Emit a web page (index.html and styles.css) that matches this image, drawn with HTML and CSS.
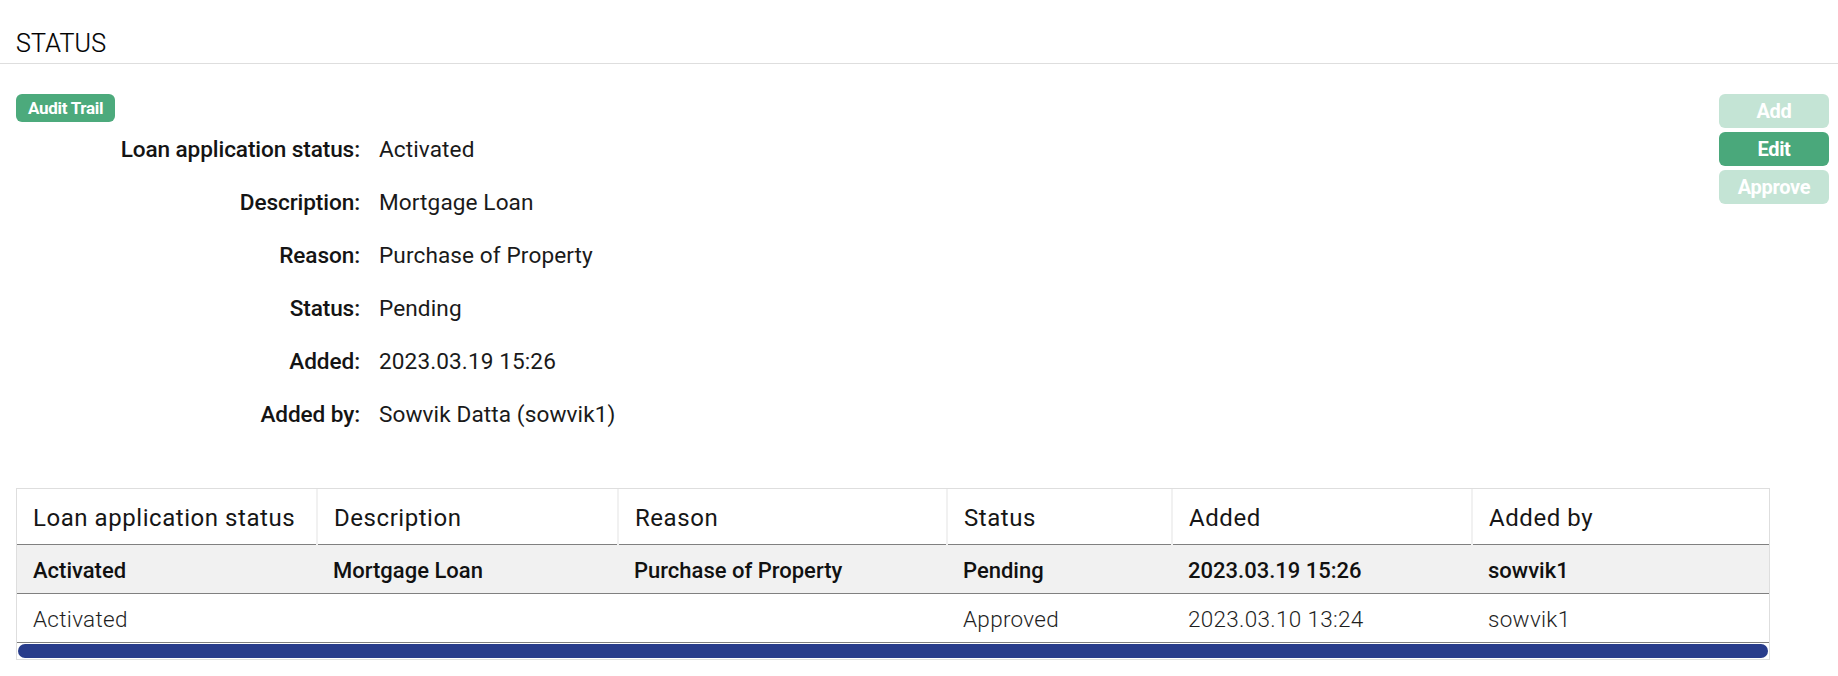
FILE: index.html
```html
<!DOCTYPE html>
<html lang="en">
<head>
<meta charset="utf-8">
<title>Status</title>
<link rel="stylesheet" href="styles.css">
</head>
<body>
<header class="page-header">
  <h1 class="page-title">STATUS</h1>
</header>
<main class="content">
  <div class="top">
    <div class="details">
      <span class="badge">Audit Trail</span>
      <dl class="fields">
        <dt>Loan application status:</dt><dd>Activated</dd>
        <dt>Description:</dt><dd>Mortgage Loan</dd>
        <dt>Reason:</dt><dd>Purchase of Property</dd>
        <dt>Status:</dt><dd>Pending</dd>
        <dt>Added:</dt><dd>2023.03.19 15:26</dd>
        <dt>Added by:</dt><dd>Sowvik Datta (sowvik1)</dd>
      </dl>
    </div>
    <div class="actions">
      <button class="btn btn-disabled" type="button">Add</button>
      <button class="btn" type="button">Edit</button>
      <button class="btn btn-disabled" type="button">Approve</button>
    </div>
  </div>

  <div class="table-wrap">
    <table class="history">
      <colgroup>
        <col class="col-1"><col class="col-2"><col class="col-3"><col class="col-4"><col class="col-5"><col class="col-6">
      </colgroup>
      <thead>
        <tr>
          <th>Loan application status</th>
          <th>Description</th>
          <th>Reason</th>
          <th>Status</th>
          <th>Added</th>
          <th>Added by</th>
        </tr>
      </thead>
      <tbody>
        <tr class="row-current">
          <td>Activated</td>
          <td>Mortgage Loan</td>
          <td>Purchase of Property</td>
          <td>Pending</td>
          <td>2023.03.19 15:26</td>
          <td>sowvik1</td>
        </tr>
        <tr class="row-old">
          <td>Activated</td>
          <td></td>
          <td></td>
          <td>Approved</td>
          <td>2023.03.10 13:24</td>
          <td>sowvik1</td>
        </tr>
      </tbody>
    </table>
    <div class="scrollbar"><div class="scrollbar-thumb"></div></div>
  </div>
</main>
</body>
</html>
```

FILE: styles.css
```css
* { box-sizing: border-box; }

html, body {
  margin: 0;
  padding: 0;
  background: #ffffff;
}

body {
  font-family: Roboto, "Liberation Sans", sans-serif;
  color: #151515;
}

.page-header {
  border-bottom: 1px solid #dedede;
  padding: 29px 16px 5px;
}

.page-title {
  margin: 0;
  font-size: 25px;
  line-height: 29px;
  font-weight: 300;
  letter-spacing: 0.2px;
  color: #000;
  -webkit-text-stroke: 0.2px #000;
}

.content {
  padding: 30px 9px 0 16px;
}

.top {
  display: flex;
  justify-content: space-between;
  align-items: flex-start;
}

.details {
  display: flex;
  flex-direction: column;
  align-items: flex-start;
}

.badge {
  display: block;
  height: 28px;
  line-height: 28px;
  padding: 0 12px;
  border-radius: 6px;
  background: #4caa7c;
  color: #fff;
  font-size: 17px;
  font-weight: 700;
  letter-spacing: -0.3px;
}

.fields {
  display: grid;
  grid-template-columns: 344px auto;
  grid-auto-rows: 53px;
  column-gap: 19px;
  align-items: center;
  margin: 0;
  padding-top: 1px;
}

.fields dt {
  text-align: right;
  font-size: 22.6px;
  font-weight: 500;
  color: #141414;
  letter-spacing: -0.1px;
}

.fields dd {
  margin: 0;
  font-size: 22.6px;
  font-weight: 400;
  color: #1a1a1a;
  letter-spacing: 0.1px;
}

.actions {
  display: flex;
  flex-direction: column;
  gap: 4px;
}

.btn {
  width: 110px;
  height: 34px;
  border: 0;
  border-radius: 6px;
  background: #4aa87b;
  color: #fff;
  font-family: Roboto, "Liberation Sans", sans-serif;
  font-size: 20px;
  font-weight: 700;
  padding: 0;
  letter-spacing: -0.3px;
}

.btn-disabled {
  background: #c4e4d5;
}

.table-wrap {
  margin-top: 47px;
  margin-right: 59px;
  border: 1px solid #dedede;
}

.history {
  width: 100%;
  border-collapse: collapse;
  table-layout: fixed;
}

.col-1 { width: 300px; }
.col-2 { width: 301px; }
.col-3 { width: 329px; }
.col-4 { width: 225px; }
.col-5 { width: 300px; }

.history th {
  height: 55px;
  padding: 3px 16px 0;
  text-align: left;
  font-size: 24px;
  font-weight: 400;
  letter-spacing: 0.55px;
  color: #161616;
  border-bottom: 1px solid #808080;
  border-right: 2px solid #f1f1f1;
  white-space: nowrap;
}

.history th:last-child {
  border-right: 0;
}

.history td {
  height: 49px;
  padding: 3px 16px 0;
  font-size: 22px;
  border-bottom: 1px solid #808080;
  white-space: nowrap;
}

.row-current td {
  background: #f1f1f1;
  font-weight: 500;
  color: #111;
}

.row-old td {
  background: #fff;
  font-weight: 300;
  color: #1e1e1e;
  font-size: 22.5px;
  letter-spacing: 0.3px;
}

.scrollbar {
  padding: 1px;
  height: 16px;
}

.scrollbar-thumb {
  height: 14px;
  border-radius: 7px;
  background: #283c8b;
}
```
